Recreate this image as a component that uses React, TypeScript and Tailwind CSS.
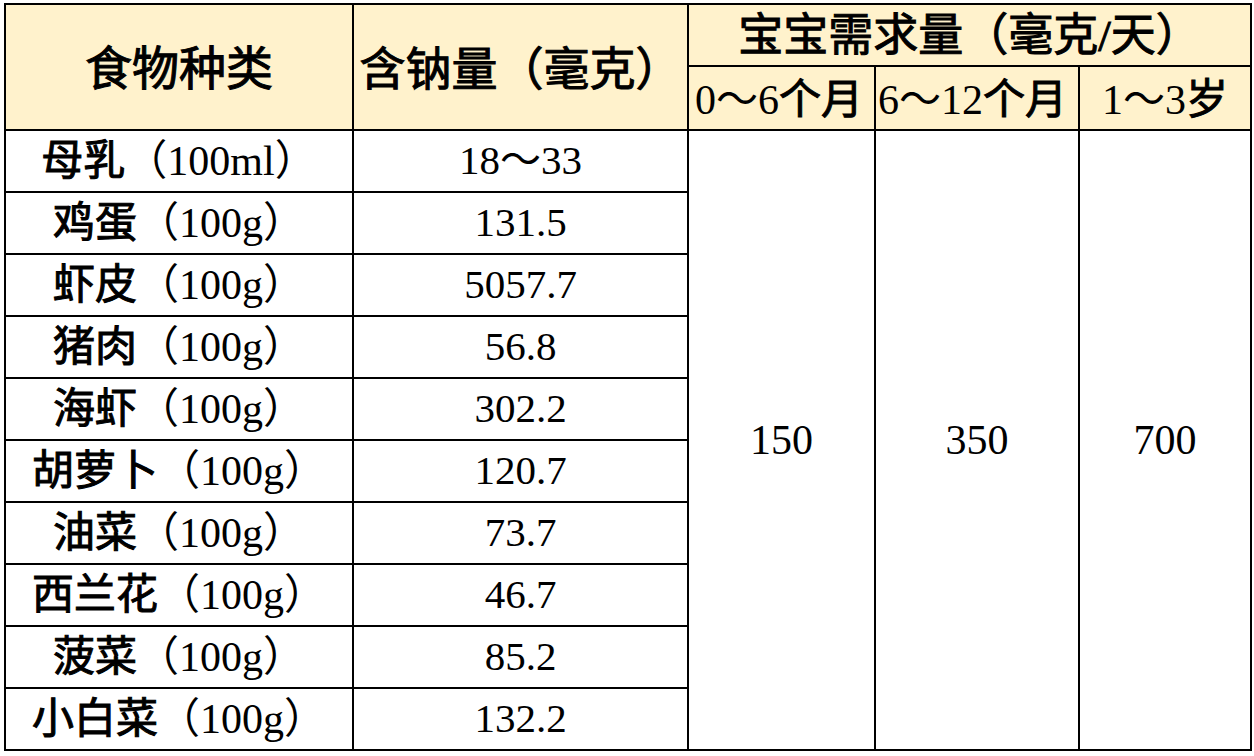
const foods = [
  { name: "母乳", unit: "（100ml）", sodium: "18～33" },
  { name: "鸡蛋", unit: "（100g）", sodium: "131.5" },
  { name: "虾皮", unit: "（100g）", sodium: "5057.7" },
  { name: "猪肉", unit: "（100g）", sodium: "56.8" },
  { name: "海虾", unit: "（100g）", sodium: "302.2" },
  { name: "胡萝卜", unit: "（100g）", sodium: "120.7" },
  { name: "油菜", unit: "（100g）", sodium: "73.7" },
  { name: "西兰花", unit: "（100g）", sodium: "46.7" },
  { name: "菠菜", unit: "（100g）", sodium: "85.2" },
  { name: "小白菜", unit: "（100g）", sodium: "132.2" },
];

const head = "flex items-center justify-center bg-[#fff2cc] pt-1";
const cell = "flex items-center justify-center bg-white";
// medium-weight Chinese: regular glyphs thickened a little
const zh = "[-webkit-text-stroke:1px_black]";

export default function App() {
  return (
    <div className="w-[1254px] h-[756px] bg-white pl-[4px] pt-[3px] text-black font-['Liberation_Serif','Noto_Sans_CJK_SC',serif]">
      <div className="grid w-fit grid-cols-[346px_333px_185px_202px_170px] grid-rows-[60px_62px_repeat(10,60px)] gap-[2px] p-[2px] bg-black">
        <div className={`${head} ${zh} row-span-2 text-[47px]`}>食物种类</div>
        <div className={`${head} ${zh} row-span-2 text-[46px]`}>含钠量（毫克）</div>
        <div className={`${head} ${zh} col-span-3 text-[45px]`}>宝宝需求量（毫克/天）</div>
        <div className={`${head} col-start-3 text-[42px] justify-start pl-[6px]`}>
          0～6<span className={zh}>个月</span>
        </div>
        <div className={`${head} col-start-4 text-[42px] justify-start pl-[2px]`}>
          6～12<span className={zh}>个月</span>
        </div>
        <div className={`${head} col-start-5 text-[42px]`}>
          1～3<span className={zh}>岁</span>
        </div>

        {foods.map((f, i) => (
          <div key={f.name} className="contents">
            <div className={`${cell} col-start-1 text-[42px]`}>
              <span className={zh}>{f.name}</span>
              {f.unit}
            </div>
            <div className={`${cell} col-start-2 text-[41px]`}>{f.sodium}</div>
            {i === 0 && (
              <>
                <div className={`${cell} col-start-3 row-start-3 row-span-10 text-[42px]`}>150</div>
                <div className={`${cell} col-start-4 row-start-3 row-span-10 text-[42px]`}>350</div>
                <div className={`${cell} col-start-5 row-start-3 row-span-10 text-[42px]`}>700</div>
              </>
            )}
          </div>
        ))}
      </div>
    </div>
  );
}
